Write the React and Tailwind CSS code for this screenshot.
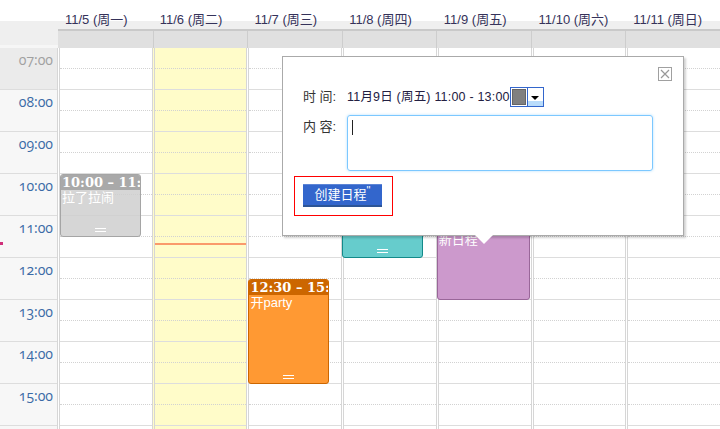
import React from 'react'

const days = [
    ['11/5', '周一'],
    ['11/6', '周二'],
    ['11/7', '周三'],
    ['11/8', '周四'],
    ['11/9', '周五'],
    ['11/10', '周六'],
    ['11/11', '周日'],
]

const hours = ['07:00', '08:00', '09:00', '10:00', '11:00', '12:00', '13:00', '14:00', '15:00', '16:00']

const cjk = { fontFamily: '"Liberation Sans", "Noto Sans CJK SC", sans-serif' }

const Handle = () => (
    <div className="absolute bottom-[4px] left-0 right-0 flex justify-center">
        <div className="w-[11px] h-[4px] border-y border-white"></div>
    </div>
)

const Event = ({ top, height, width, left = 0, head, body, border, time, title }) => {
    return (
        <div
            className={`absolute rounded-[3px] border overflow-hidden ${border} ${body}`}
            style={{ top, height, width, left }}
        >
            <div className={`h-[15px] px-[1px] text-white text-[13px] leading-[15px] font-bold whitespace-nowrap ${head}`} style={{ fontFamily: '"DejaVu Serif", serif' }}>
                {time}
            </div>
            <div className="px-[1px] text-white text-[13px] leading-[16px]" style={cjk}>
                {title}
            </div>
            <Handle />
        </div>
    )
}

const App = () => {
    return (
        <div className="relative w-[720px] h-[429px] overflow-hidden bg-white" style={cjk}>
            {/* day headings */}
            <div className="flex h-[29px] bg-[linear-gradient(to_bottom,#ffffff_21px,#efefef_21px)]">
                <div className="w-[57px] shrink-0"></div>
                <div className="flex-1 grid grid-cols-7">
                    {days.map(([d, w]) => (
                        <div key={d} className="pl-[8px] pt-[12px] text-[13px] leading-[15px] text-[#35325a] whitespace-nowrap">
                            {d} ({w})
                        </div>
                    ))}
                </div>
            </div>

            {/* all day row */}
            <div className="flex h-[19px]">
                <div className="w-[58px] shrink-0 bg-[#efefef] border-b-[3px] border-[#f6f6f6]"></div>
                <div className="flex-1 grid grid-cols-7 bg-[#e0e0e0] border-t-2 border-[#c9c9c9]">
                    {days.map(([d], i) => (
                        <div key={d} className={i ? 'border-l border-[#cdcdcd]' : ''}></div>
                    ))}
                </div>
            </div>

            {/* body */}
            <div className="flex">
                <div className="relative w-[57px] shrink-0 bg-[#f7f7f7]">
                    {hours.map((h, i) => (
                        <div
                            key={h}
                            className={`h-[42px] border-b border-[#dddddd] pr-[4px] pt-[4px] text-right text-[14px] leading-[16px] oldstyle-nums ${i === 0 ? 'bg-[#ebebeb] text-[#a0a0a0]' : 'text-[#3a6aa6]'}`}
                            style={{ fontFamily: '"Open Sans", "DejaVu Serif", serif' }}
                        >
                            {h}
                        </div>
                    ))}
                    <div className="absolute left-0 top-[194px] w-[3px] h-[3px] bg-[#d0307a]"></div>
                </div>
                <div className="flex-1 grid grid-cols-7">
                    {days.map(([d], col) => (
                        <div
                            key={d}
                            className={`relative border-l-[3px] border-double border-[#d6d6d6] ${col === 1 ? 'bg-[#fffcc9]' : ''}`}
                        >
                            {hours.map((h) => (
                                <div key={h} className="h-[42px] border-b border-[#dddddd]">
                                    <div className="h-[21px] border-b border-dotted border-[#d2d2d2]"></div>
                                </div>
                            ))}

                            {col === 0 && (
                                <Event
                                    top={126}
                                    height={63}
                                    width={81}
                                    head="bg-[#a9a9a9]"
                                    body="bg-[#cfcfcf]/85"
                                    border="border-[#a5a5a5]"
                                    time="10:00 – 11:30"
                                    title="拉了拉闹"
                                />
                            )}
                            {col === 1 && (
                                <div className="absolute left-0 right-0 top-[195px] h-[2px] bg-[#fa9a6b]"></div>
                            )}
                            {col === 2 && (
                                <Event
                                    top={231}
                                    height={105}
                                    width={81}
                                    left={-1}
                                    head="bg-[#cc6600]"
                                    body="bg-[#ff9933]"
                                    border="border-[#cc6600]"
                                    time="12:30 – 15:00"
                                    title="开party"
                                />
                            )}
                            {col === 3 && (
                                <Event
                                    top={147}
                                    height={63}
                                    width={81}
                                    left={-2}
                                    head="bg-[#339999]"
                                    body="bg-[#66cccc]"
                                    border="border-[#138a8a]"
                                    time="10:30 – 12:00"
                                    title="开会"
                                />
                            )}
                            {col === 4 && (
                                <div className="absolute left-[-2px] top-[168px] h-[84px] w-[93px] rounded-[3px] border border-[#996699] bg-[#cc99cc] overflow-hidden">
                                    <div className="h-[15px] bg-[#a874a8]"></div>
                                    <div className="px-[1px] text-white text-[13px] leading-[16px]">新日程</div>
                                </div>
                            )}
                        </div>
                    ))}
                </div>
            </div>

            {/* quick add popup */}
            <div className="absolute left-[282px] top-[56px] w-[402px] h-[180px] bg-white border border-[#aaaaaa] shadow-[2px_2px_2px_rgba(0,0,0,0.18)] text-[12px] text-[#333]">
                <div className="absolute right-[11px] top-[10px] w-[14px] h-[14px] border border-[#a0a0a0]">
                    <svg viewBox="0 0 12 12" className="w-full h-full">
                        <path d="M2 2 L10 10 M10 2 L2 10" stroke="#999" strokeWidth="1.2" fill="none" />
                    </svg>
                </div>

                <div className="flex items-center h-[20px] mt-[30px] pl-[20px]">
                    <div className="w-[44px] text-[13px]">时 间:</div>
                    <div className="text-[12.5px] tracking-[0.2px] text-[#232042] whitespace-nowrap">11月9日 (周五) 11:00 - 13:00</div>
                    <div className="flex w-[34px] h-[20px] border border-[#3366cc]">
                        <div className="w-[17px] border-r border-[#3366cc] p-[1px]">
                            <div className="w-full h-full bg-[#808080] border border-[#666]"></div>
                        </div>
                        <div className="flex-1 flex items-center justify-center bg-[linear-gradient(to_bottom,#ffffff_70%,#b9dcfb_70%)]">
                            <div className="w-0 h-0 border-x-[4px] border-x-transparent border-t-[4px] border-t-black mt-[1px]"></div>
                        </div>
                    </div>
                </div>

                <div className="flex mt-[8px] pl-[20px]">
                    <div className="w-[44px] pt-[2px] text-[13px]">内 容:</div>
                    <div className="relative w-[306px] h-[56px] rounded-[3px] border border-[#7cc8ff] shadow-[0_0_3px_#b5e0ff]">
                        <div className="absolute left-[4px] top-[4px] w-[1px] h-[15px] bg-[#222]"></div>
                    </div>
                </div>

                <div className="mt-[5px] ml-[11px] w-[99px] h-[40px] border border-[#ff0000] pt-[7px] pl-[8px]">
                    <div className="w-[79px] h-[23px] bg-[#3366cc] border-t border-[#5d85d6] border-b-2 border-b-[#2d5596] text-white text-[13px] leading-[20px] text-center">
                        创建日程<span className="text-[11px] leading-[10px] align-top">"</span>
                    </div>
                </div>

                <div className="absolute left-[192px] bottom-[-9px] w-0 h-0 border-x-[9px] border-x-transparent border-t-[9px] border-t-white"></div>
            </div>
        </div>
    )
}

export default App
